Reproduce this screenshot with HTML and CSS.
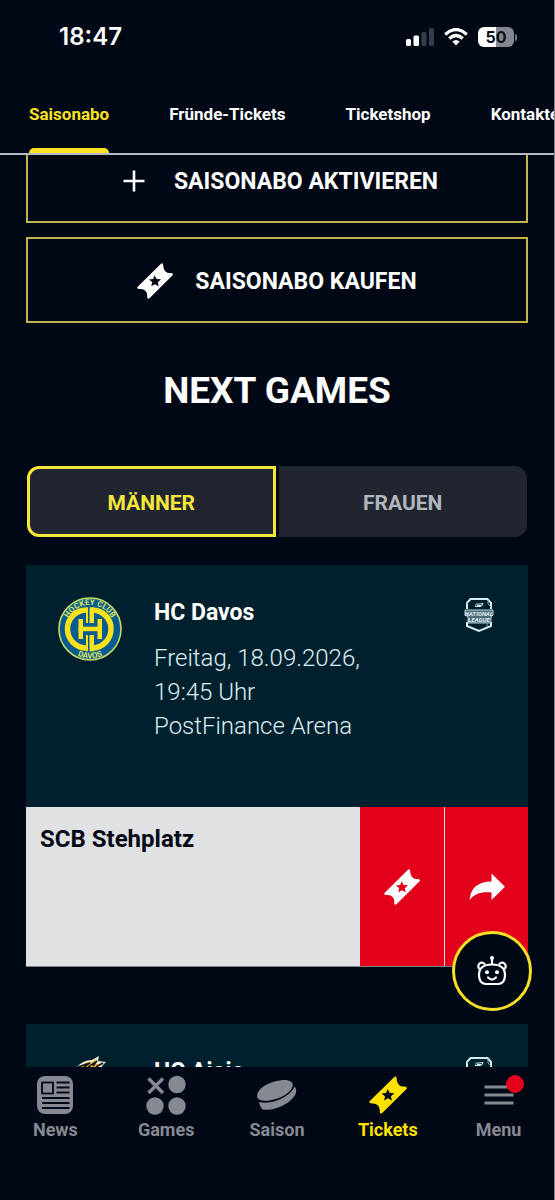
FILE: index.html
```html
<!DOCTYPE html>
<html lang="de">
<head>
<meta charset="utf-8">
<meta name="viewport" content="width=device-width, initial-scale=1">
<title>Tickets</title>
<link rel="stylesheet" href="styles.css">
</head>
<body>
<svg class="sprite" aria-hidden="true">
  <symbol id="ticket" viewBox="0 0 36 36">
    <path fill-rule="evenodd" d="M24 .8Q25.300-.3 26 1.200L26.400 3.200A6.300 6.300 0 0 0 33.200 10L35 10.200Q36.500 11 35.600 12.300L12.500 35.200Q11 36.300 10.300 34.800L10.200 32.600A6.300 6.300 0 0 0 3.600 26L1.400 25.900Q-.5 25.200.7 23.700ZM17.600 12.200 16.200 16 11.800 16.500 15.200 19.100 14.300 23.300 18 21.200 21.700 23.500 20.800 19.200 24 16.300 19.500 15.900Z"/>
  </symbol>
  <symbol id="league" viewBox="0 0 30 36">
    <path d="M3 12V6L6.500 2H23.500L27 6V12M3 25V29L15 34 27 29V25" fill="none" stroke="#d3ecf5" stroke-width="2"/>
    <path d="M3 7 7 3M24 3V7L27 10M23 27V30" stroke="#7ba0ae" fill="none"/>
    <path d="M11 8.500Q12 6.500 15 7L19 6.500Q19 9 16 9.500L11 9.500M13 8.500H17" stroke="#d3ecf5" fill="none"/>
    <path d="M1 13H29V18L27 20V26H4V20L1 18Z" fill="#4f6c79" stroke="#b6d2dc"/>
  </symbol>
</svg>
<div class="app">
  <header class="top">
    <div class="status">
      <span class="time">18:47</span>
      <div class="indicators">
        <svg width="28" height="18" viewBox="0 0 28 18" aria-label="Signal"><g fill="#fff"><rect y="11" width="5" height="7" rx="1.500"/><rect x="7.500" y="7.500" width="5.500" height="10.500" rx="1.500"/></g><g fill="#363c49"><rect x="15.500" y="4" width="5" height="14" rx="1.500"/><rect x="23" width="5" height="18" rx="1.500"/></g></svg>
        <svg width="24" height="18" viewBox="0 0 24 18" aria-label="WLAN"><g fill="none" stroke="#fff" stroke-width="3.200"><path d="M1.200 6.500Q12-3.500 22.800 6.500"/><path d="M5.200 10.500Q12 4.500 18.800 10.500"/></g><path d="M8.300 13.500Q12 10.300 15.700 13.500L12 17.500Z" fill="#fff"/></svg>
        <div class="battery">50</div>
      </div>
    </div>
    <nav class="tabs">
      <a href="#" class="tab active">Saisonabo</a>
      <a href="#" class="tab">Fründe-Tickets</a>
      <a href="#" class="tab">Ticketshop</a>
      <a href="#" class="tab">Kontakte</a>
    </nav>
  </header>

  <div class="stage">
    <main class="scroller">
      <div class="actions">
        <button class="action"><svg width="36" height="36" viewBox="0 0 36 36"><path d="M18 7.500V28.500M7.500 18H28.500" stroke="#fff" stroke-width="2.600"/></svg>SAISONABO AKTIVIEREN</button>
        <button class="action"><svg width="36" height="36" fill="#fff"><use href="#ticket"/></svg>SAISONABO KAUFEN</button>
      </div>
      <h1>NEXT GAMES</h1>
      <div class="switch">
        <button class="choice chosen" aria-pressed="true">MÄNNER</button>
        <button class="choice" aria-pressed="false">FRAUEN</button>
      </div>
      <article class="game">
        <div class="match">
          <svg class="crest" viewBox="0 0 64 64" aria-label="HC Davos">
            <circle cx="32" cy="32" r="31" fill="#075b91" stroke="#c8d865" stroke-width="1.600"/>
            <g fill="none" stroke="#f9e21b" stroke-width="5.500"><path d="M28.500 13A19 19 0 0 0 28.500 51"/><path d="M34 13A19 19 0 0 1 34 51"/></g>
            <g fill="#f9e21b"><rect x="28" y="10.300" width="2" height="44"/><rect x="31.500" y="10.300" width="4.500" height="44"/></g>
            <rect x="25" y="26" width="14.500" height="12" fill="#075b91"/>
            <g fill="#f9e21b"><rect x="20.500" y="22" width="4.500" height="20"/><rect x="39.500" y="22" width="4.500" height="20"/><rect x="20.500" y="29.700" width="23.500" height="4.500"/></g>
            <path id="arc-top" d="M8 32A24 24 0 0 1 56 32" fill="none"/>
            <path id="arc-low" d="M2.500 32A29.500 29.500 0 0 0 61.500 32" fill="none"/>
            <text class="crest-text"><textPath href="#arc-top" startOffset="50%">HOCKEY CLUB</textPath></text>
            <text class="crest-text"><textPath href="#arc-low" startOffset="50%">DAVOS</textPath></text>
          </svg>
          <div class="info">
            <h2>HC Davos</h2>
            <p>Freitag, 18.09.2026,<br>19:45 Uhr<br>PostFinance Arena</p>
          </div>
          <svg class="league" viewBox="0 0 30 36" aria-label="National League"><use href="#league"/><text x="15" y="18.500" class="league-text">NATIONAL</text><text x="15" y="25" class="league-text">LEAGUE</text></svg>
        </div>
        <div class="seat">
          <h3>SCB Stehplatz</h3>
          <button class="red" aria-label="Ticket anzeigen"><svg width="36" height="36" fill="#fff"><use href="#ticket"/></svg></button>
          <button class="red" aria-label="Ticket weitergeben"><svg width="36" height="28" viewBox="0 0 36 28"><path d="M22.500 .5 36 13.800 22.500 27V19.500C12 18.500 5.500 21 .5 27 1.500 15 9 8.500 22.500 8.500Z" fill="#fff"/></svg></button>
        </div>
      </article>
      <article class="game">
        <div class="match">
          <svg class="crest" viewBox="0 0 64 64" aria-label="HC Ajoie"><path d="M19 11Q25 4 34 4L41 0 40 5 48 6 44 10 46 20 20 24Z" fill="#f4f0d6"/><path d="M22 10Q27 6 34 6L39 3 36 8 45 8 40 11 42 20 22 22Z" fill="#e2ae2e"/><path d="M20 11 32 7 26 11M30 11 39 5 35 10M38 11 45 7" stroke="#09131d" fill="none" stroke-width="1.500"/></svg>
          <div class="info">
            <h2>HC Ajoie</h2>
          </div>
          <svg class="league" viewBox="0 0 30 36" aria-label="National League"><use href="#league"/></svg>
        </div>
      </article>
    </main>
    <button class="bot" aria-label="Chatbot"><svg width="32" height="32" viewBox="0 0 32 32"><g fill="none" stroke="#fff" stroke-width="2.200"><path d="M9.500 29C5 28.500 3 24.500 3 20 3 12.500 8 9.500 16 9.500S29 12.500 29 20C29 24.500 27 28.500 22.500 29Z"/><path d="M3.500 14A3.600 3.600 0 1 1 9 9.500M28.500 14A3.600 3.600 0 1 0 23 9.500M16 9V4"/><path d="M12 22.500Q16 26.500 20 22.500" stroke-linecap="round"/></g><g fill="#fff"><circle cx="16" cy="3" r="2"/><circle cx="11" cy="17.300" r="2"/><circle cx="21" cy="17.300" r="2"/></g></svg></button>
  </div>

  <nav class="bottom">
    <a href="#" class="item"><svg width="38" height="40" viewBox="0 0 38 40"><rect x="1" y="1" width="36" height="38" rx="8" fill="currentColor"/><g fill="none" stroke="#000815" stroke-width="1.800"><rect x="6" y="7.500" width="11" height="11"/><path d="M20.500 7.500H33.500M20.500 12.500H33.500M20.500 17.500H33.500M6 23H33.500M6 28H33.500M6 33H33.500"/></g></svg>News</a>
    <a href="#" class="item"><svg width="40" height="40" viewBox="0 0 40 40" fill="currentColor"><path d="M2.500 3.500 17 18M17 3.500 2.500 18" stroke="currentColor" stroke-width="3.500"/><circle cx="31" cy="9.500" r="8.700"/><circle cx="9" cy="31" r="8.700"/><circle cx="31" cy="31" r="8.700"/></svg>Games</a>
    <a href="#" class="item"><svg width="42" height="40" viewBox="0 0 42 40" fill="currentColor"><path d="M1.300 22.500C-.5 15 11 7 25 5.200 33 4.300 38 6.800 36.500 11.500 34 20 17 27 6.500 25.500 3.500 25 1.700 24.200 1.300 22.500Z"/><path d="M3 27C16 30 34 22 38.500 11.500 43.500 17 37 26 26 31 18 34.500 11 35.500 6.500 34.500 4.500 32.500 3.500 29.500 3 27Z"/></svg>Saison</a>
    <a href="#" class="item current"><svg width="40" height="40" viewBox="-1 -1 38 38" fill="currentColor"><use href="#ticket" width="36" height="36"/></svg>Tickets</a>
    <a href="#" class="item"><svg width="40" height="40" viewBox="0 0 40 40"><path d="M5.500 12H34.500M5.500 20H34.500M5.500 28H34.500" stroke="currentColor" stroke-width="2.800"/></svg><span class="dot"></span>Menu</a>
  </nav>
</div>
</body>
</html>
```

FILE: styles.css
```css
* { box-sizing: border-box; }
body {
  margin: 0;
  background: #000815;
  color: #fff;
  font-family: Roboto, "Liberation Sans", sans-serif;
}
button {
  font: inherit;
  color: inherit;
  border: 0;
  padding: 0;
  cursor: pointer;
}
a { color: inherit; text-decoration: none; }
h1, h2, h3, p { margin: 0; }
svg { display: block; flex: none; }
.sprite { position: absolute; width: 0; height: 0; }

.app {
  display: flex;
  flex-direction: column;
  height: 100vh;
  border-right: 1px solid #7f838c;
}

.top { border-bottom: 2px solid #b6bac4; }
.status {
  display: flex;
  justify-content: space-between;
  align-items: center;
  height: 74px;
  padding: 0 40px 0 59px;
}
.time { font: 600 24px/28px Inter, sans-serif; }
.indicators { display: flex; align-items: center; gap: 10px; }
.battery {
  position: relative;
  width: 36px;
  height: 20px;
  border-radius: 6px;
  background: linear-gradient(90deg, #fff 50%, #858891 50%);
  color: #0a101c;
  font: 700 16px/20px Inter, sans-serif;
  text-align: center;
}
.battery::after {
  content: "";
  position: absolute;
  left: 37px;
  top: 7px;
  width: 2px;
  height: 7px;
  border-radius: 0 3px 3px 0;
  background: #70747d;
}
.tabs {
  display: flex;
  gap: 60px;
  height: 79px;
  padding-left: 29px;
  overflow: hidden;
}
.tab {
  position: relative;
  flex: none;
  padding-top: 28px;
  font-size: 17px;
  line-height: 24px;
  font-weight: 700;
}
.tab.active { color: #fbe122; }
.tab.active::after {
  content: "";
  position: absolute;
  left: 0;
  right: 0;
  bottom: 0;
  height: 5px;
  border-radius: 5px 5px 0 0;
  background: #fbe122;
}

.stage {
  position: relative;
  flex: 1;
  min-height: 0;
}
.scroller {
  height: 100%;
  overflow: hidden;
  padding: 0 26px;
}
/* the list rests slightly scrolled under the tab bar */
.actions {
  display: grid;
  gap: 14px;
  margin-top: -18px;
}
.action {
  display: flex;
  align-items: center;
  justify-content: center;
  gap: 22px;
  height: 86px;
  padding-top: 2px;
  border: 2px solid #c3b449;
  background: transparent;
  font-size: 23px;
  font-weight: 700;
}
h1 {
  padding: 44px 0 51px;
  font-size: 37px;
  line-height: 48px;
  text-align: center;
}
.switch {
  display: grid;
  grid-template-columns: 1fr 1fr;
  gap: 3px;
  padding: 0 1px;
}
.choice {
  height: 71px;
  padding-top: 2px;
  border-radius: 0 12px 12px 0;
  background: #20252f;
  color: #b3b5bd;
  font-size: 21px;
  font-weight: 700;
}
.chosen {
  border: 3px solid #f5e63c;
  border-radius: 12px 0 0 12px;
  color: #f5e63c;
}

.game { margin: 28px 0 57px; }
.match {
  display: flex;
  min-height: 242px;
  padding: 32px 34px 32px 32px;
  background: #00202e;
}
.crest { width: 64px; height: 64px; }
.info { flex: 1; padding-left: 32px; }
.info h2 {
  font-size: 23px;
  line-height: 32px;
}
.info p {
  margin-top: 12px;
  color: #dcf0f5;
  font-size: 24px;
  font-weight: 300;
  line-height: 34px;
}
.league { width: 30px; height: 36px; }
.league-text {
  fill: #e2f2f7;
  font: italic 700 6px Roboto, sans-serif;
  text-anchor: middle;
}
.crest-text {
  fill: #dfe35c;
  font: 700 8px Roboto, sans-serif;
  text-anchor: middle;
}
.seat {
  display: grid;
  grid-template-columns: 1fr 84px 83px;
  column-gap: 1px;
  min-height: 160px;
  border-bottom: 1px solid #7b7f87;
  background: #e0e1e3;
  color: #020815;
}
.seat h3 {
  padding: 16px 14px;
  font-size: 24px;
  line-height: 32px;
}
.red {
  display: grid;
  place-items: center;
  background: #e2001a;
}
.bot {
  position: absolute;
  right: 22px;
  bottom: 56px;
  display: grid;
  place-items: center;
  width: 80px;
  height: 80px;
  border: 3px solid #f4de27;
  border-radius: 50%;
  background: #000815;
}

.bottom {
  display: grid;
  grid-template-columns: repeat(5, 1fr);
  height: 133px;
  padding-top: 8px;
}
.item {
  position: relative;
  display: flex;
  flex-direction: column;
  align-items: center;
  gap: 3px;
  color: #868992;
  font-size: 18px;
  line-height: 24px;
  font-weight: 700;
}
.current { color: #ffe100; }
.dot {
  position: absolute;
  left: 50%;
  top: 0;
  width: 18px;
  height: 18px;
  margin-left: 7px;
  border-radius: 50%;
  background: #e4001b;
}
```
